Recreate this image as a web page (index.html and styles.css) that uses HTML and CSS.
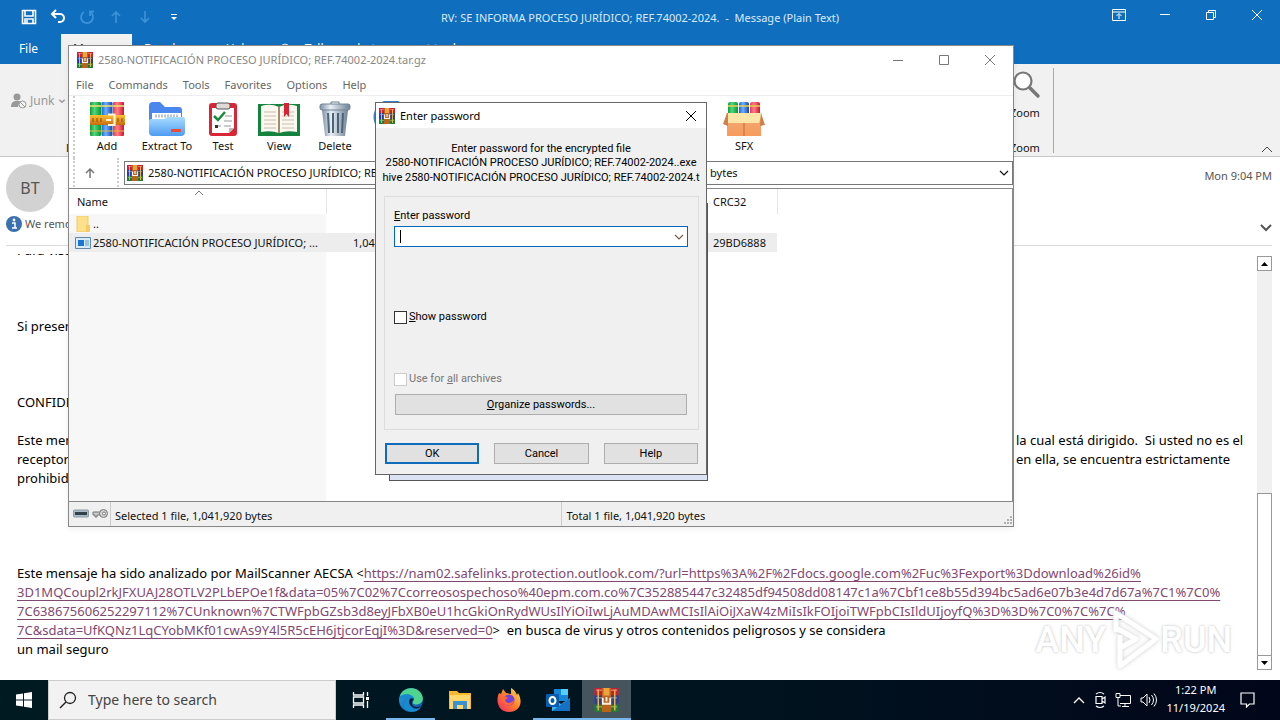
FILE: index.html
```html
<!DOCTYPE html>
<html lang="es">
<head>
<meta charset="utf-8">
<title>RV: SE INFORMA PROCESO JURÍDICO - Message</title>
<link rel="stylesheet" href="styles.css">
</head>
<body>
<svg class="defs" aria-hidden="true">
  <defs>
    <linearGradient id="gRed"><stop offset="0" stop-color="#e8394b"/><stop offset=".4" stop-color="#ff7f86"/><stop offset="1" stop-color="#d5122a"/></linearGradient>
    <linearGradient id="gBlue"><stop offset="0" stop-color="#1a62d6"/><stop offset=".4" stop-color="#6fb1fb"/><stop offset="1" stop-color="#1146a8"/></linearGradient>
    <linearGradient id="gGreen"><stop offset="0" stop-color="#0f9a3f"/><stop offset=".4" stop-color="#52d67c"/><stop offset="1" stop-color="#08962e"/></linearGradient>
    <linearGradient id="gGold" x2="0" y2="1"><stop offset="0" stop-color="#ffc233"/><stop offset="1" stop-color="#c96a0c"/></linearGradient>
    <linearGradient id="gFolder" x2="0" y2="1"><stop offset="0" stop-color="#a9dcff"/><stop offset="1" stop-color="#4c9bf2"/></linearGradient>
    <linearGradient id="gSteel"><stop offset="0" stop-color="#7d91a4"/><stop offset=".35" stop-color="#e8eff5"/><stop offset="1" stop-color="#6e8195"/></linearGradient>
    <linearGradient id="gBox" x2="0" y2="1"><stop offset="0" stop-color="#f0ad78"/><stop offset="1" stop-color="#f79a5c"/></linearGradient>
    <linearGradient id="gEdge" x2="1" y2="1"><stop offset="0" stop-color="#2aa5e0"/><stop offset="1" stop-color="#0c4fa0"/></linearGradient>
    <linearGradient id="gFox" x1="1" x2="0" y2="1"><stop offset="0" stop-color="#ffe14a"/><stop offset=".5" stop-color="#ff7b2b"/><stop offset="1" stop-color="#f0246a"/></linearGradient>
    <symbol id="books" viewBox="0 0 16 16">
      <rect x="0" y="0" width="16" height="5" fill="#c8203c"/><rect x="1" y="1" width="14" height="1" fill="#ea6a78"/>
      <rect x="0" y="5" width="16" height="6" fill="#2b3f9d"/><rect x="1" y="6" width="14" height="1" fill="#6c7fd0"/>
      <rect x="0" y="11" width="16" height="5" fill="#1f7a3c"/><rect x="1" y="12" width="14" height="1" fill="#58b06c"/>
      <rect x="2" y="1" width="1" height="14" fill="#e8b33a"/><rect x="13" y="1" width="1" height="14" fill="#e8b33a"/>
      <rect x="5" width="6" height="16" fill="#b8641c"/><rect x="6" width="4" height="5" fill="#eda23a"/>
      <path d="M5.500 6.500v4h5v-4M8 6v3" fill="none" stroke="#fff3e2" stroke-width="1.200"/>
    </symbol>
    <symbol id="close" viewBox="0 0 12 12"><path d="M1 1l10 10M11 1L1 11" fill="none" stroke="currentColor"/></symbol>
    <symbol id="chev" viewBox="0 0 12 8"><path d="M2 2l4 4 4-4" fill="none" stroke="currentColor" stroke-width="1.200"/></symbol>
    <symbol id="lens" viewBox="0 0 18 18"><circle cx="11" cy="7" r="5.500" fill="none" stroke="currentColor" stroke-width="1.300"/><path d="M7 11l-6 6" stroke="currentColor" stroke-width="1.500"/></symbol>
  </defs>
</svg>
<div class="desktop">
  <main class="mail">
    <header class="mail-title">
      <div class="quick">
        <button aria-label="Save"><svg width="16" height="16" viewBox="0 0 16 16"><path d="M1.500 1.500h13v13h-13zM4 2v5h8V2M4 14.500V10h8v4.500M6 11v3" fill="none" stroke="#fff" stroke-width="1.600"/></svg></button>
        <button aria-label="Undo"><svg width="16" height="16" viewBox="0 0 16 16"><path d="M6 1L2 5l4 4M2.500 5H10a4 4 0 010 8H8" fill="none" stroke="#fff" stroke-width="2"/></svg></button>
        <button aria-label="Redo"><svg width="16" height="16" viewBox="0 0 16 16"><path d="M5 3a6 6 0 106 0M11 7V2.500h4" fill="none" stroke="#3d93d8" stroke-width="1.800"/></svg></button>
        <button aria-label="Previous"><svg width="16" height="16" viewBox="0 0 16 16"><path d="M8 14V3M4 7l4-4 4 4" fill="none" stroke="#3d93d8" stroke-width="1.600"/></svg></button>
        <button aria-label="Next"><svg width="16" height="16" viewBox="0 0 16 16"><path d="M8 2v11M4 9l4 4 4-4" fill="none" stroke="#3d93d8" stroke-width="1.600"/></svg></button>
        <button aria-label="Customize"><svg width="16" height="16" viewBox="0 0 16 16"><path d="M5 5.500h6" stroke="#fff"/><path d="M5 8h6l-3 3z" fill="#fff"/></svg></button>
      </div>
      <div class="caption">RV: SE INFORMA PROCESO JURÍDICO; REF.74002-2024.&nbsp; -&nbsp; Message (Plain Text)</div>
      <div class="mail-controls">
        <button aria-label="Ribbon options"><svg width="14" height="12" viewBox="0 0 14 12"><path d="M.5.5h13v11H.5zM.5 3h13M7 10V5M4.500 7L7 4.500 9.500 7" fill="none" stroke="#fff"/></svg></button>
        <button aria-label="Minimize"><svg width="12" height="12"><path d="M1 5.500h10" stroke="#fff"/></svg></button>
        <button aria-label="Restore"><svg width="12" height="12" viewBox="0 0 12 12"><path d="M1.500 3.500h7v7h-7zM3.500 3V1.500h7v7H9" fill="none" stroke="#fff"/></svg></button>
        <button aria-label="Close"><svg width="12" height="12"><use href="#close"/></svg></button>
      </div>
    </header>
    <nav class="tabs">
      <button>File</button><button class="on">Message</button><button>Developer</button><button>Help</button>
      <button class="tell"><svg width="13" height="13"><use href="#lens"/></svg>Tell me what you want to do</button>
    </nav>
    <section class="ribbon">
      <div class="junk"><svg width="16" height="16" viewBox="0 0 16 16"><circle cx="6" cy="4" r="3.500" fill="#999"/><path d="M0 14c0-4 2-6 5-6h4l-2 6z" fill="#999"/><circle cx="11.500" cy="11.500" r="3.500" fill="#f1f1f1" stroke="#999"/><path d="M9 9l5 5" stroke="#999"/></svg>Junk <svg width="8" height="6" viewBox="0 0 12 8"><path d="M2 2l4 4 4-4" fill="none" stroke="#999" stroke-width="2"/></svg></div>
      <div class="group-label">Delete</div>
      <div class="zoom-group">
        <svg width="28" height="28" viewBox="0 0 28 28"><circle cx="10" cy="10" r="8.500" fill="#fff" stroke="#777" stroke-width="2.200"/><path d="M17 17l8 8" stroke="#777" stroke-width="3.500" stroke-linecap="round"/></svg>
        <span>Zoom</span><span>Zoom</span>
      </div>
      <button class="collapse" aria-label="Collapse ribbon"><svg width="12" height="8" viewBox="0 0 12 8"><path d="M1 7l5-5 5 5" fill="none" stroke="#444"/></svg></button>
    </section>
    <section class="sender">
      <div class="avatar">BT</div>
      <div class="sent">Mon 9:04 PM</div>
      <div class="info"><svg width="16" height="16" viewBox="0 0 16 16"><circle cx="8" cy="8" r="8" fill="#3a71ae"/><circle cx="8" cy="4" r="1.400" fill="#fff"/><path d="M6 7h3v5M6 12h5" fill="none" stroke="#fff" stroke-width="1.500"/></svg>We removed</div>
      <svg class="expand" width="12" height="8" viewBox="0 0 12 8"><path d="M1 1l5 5 5-5" fill="none" stroke="#555" stroke-width="2"/></svg>
    </section>
    <section class="reading">
      <article class="letter">
        <p class="gap3">Para visualizar</p>
        <p class="gap3">Si presenta</p>
        <p class="gap1">CONFIDENCIAL</p>
        <div class="split gap4">
          <p>Este mensaje</p><p>la cual está dirigido.&nbsp; Si usted no es el</p>
          <p>receptor</p><p>en ella, se encuentra estrictamente</p>
          <p>prohibido</p>
        </div>
        <p>Este mensaje ha sido analizado por MailScanner AECSA &lt;<a href="#">https://nam02.safelinks.protection.outlook.com/?url=https%3A%2F%2Fdocs.google.com%2Fuc%3Fexport%3Ddownload%26id%<br>3D1MQCoupl2rkJFXUAJ28OTLV2PLbEPOe1f&amp;data=05%7C02%7Ccorreosospechoso%40epm.com.co%7C352885447c32485df94508dd08147c1a%7Cbf1ce8b55d394bc5ad6e07b3e4d7d67a%7C1%7C0%<br>7C638675606252297112%7CUnknown%7CTWFpbGZsb3d8eyJFbXB0eU1hcGkiOnRydWUsIlYiOiIwLjAuMDAwMCIsIlAiOiJXaW4zMiIsIkFOIjoiTWFpbCIsIldUIjoyfQ%3D%3D%7C0%7C%7C%<br>7C&amp;sdata=UfKQNz1LqCYobMKf01cwAs9Y4l5R5cEH6jtjcorEqjI%3D&amp;reserved=0</a>&gt;&nbsp; en busca de virus y otros contenidos peligrosos y se considera<br>un mail seguro</p>
      </article>
      <div class="scroll" aria-hidden="true">
        <div class="arrow"><svg width="7" height="4"><path d="M0 4l3.500-4L7 4z"/></svg></div>
        <div class="track"></div><div class="thumb"></div>
        <div class="arrow"><svg width="7" height="4"><path d="M0 0l3.500 4L7 0z"/></svg></div>
      </div>
    </section>
    <div class="watermark">ANY<svg width="54" height="64" viewBox="0 0 54 64"><path d="M10 24V5L50 31 14 58V40l16-9-20-11M14 40V27" fill="none" stroke="#fff" stroke-width="5" stroke-linejoin="round"/></svg>RUN</div>
  </main>

  <section class="rar" aria-label="WinRAR">
    <header class="rar-title"><svg width="16" height="16"><use href="#books"/></svg><span>2580-NOTIFICACIÓN PROCESO JURÍDICO; REF.74002-2024.tar.gz</span>
      <div class="rar-controls">
        <button aria-label="Minimize"><svg width="12" height="12"><path d="M1 6.500h10" stroke="#777"/></svg></button>
        <button aria-label="Maximize"><svg width="12" height="12"><path d="M1.500 1.500h9v9h-9z" fill="none" stroke="#777"/></svg></button>
        <button aria-label="Close"><svg width="12" height="12"><use href="#close"/></svg></button>
      </div>
    </header>
    <nav class="menu"><button>File</button><button>Commands</button><button>Tools</button><button>Favorites</button><button>Options</button><button>Help</button></nav>
    <div class="tools">
      <button><svg width="36" height="36" viewBox="0 0 36 36"><rect x="1" y="1" width="11" height="34" rx="1" fill="url(#gGreen)"/><rect x="12.500" y="1" width="11" height="34" rx="1" fill="url(#gBlue)"/><rect x="24" y="1" width="11" height="34" rx="1" fill="url(#gRed)"/><path d="M1 5h11M12.500 5h11M24 5h11" stroke="#f4e36a" stroke-width="1.500"/><path d="M1 30h34" stroke="#e7b838"/><rect x="1" y="14" width="35" height="10" fill="url(#gGold)"/><path d="M4 17v4M8 17v4M12 17v4M29 17v4M33 17v4" stroke="#8e4c08" fill="none"/><path d="M19 13.500h6.500v10.500H19M17 19h5" fill="none" stroke="#fff4dc" stroke-width="2.200"/></svg>Add</button>
      <button><svg width="38" height="36" viewBox="0 0 38 36"><path d="M1 30V5q0-4 4-4h7l5 5h14q3 0 3 3v21z" fill="#4a86ee"/><path d="M4 12h29v12H4z" fill="#fff"/><path d="M7 15h23" stroke="#b7c4d2" stroke-width="3" stroke-dasharray="2 1"/><path d="M1 20q0-2 2-2h13l4-2h15q2 0 2 2v13q0 4-4 4H5q-4 0-4-4z" fill="url(#gFolder)"/><rect x="23" y="28" width="10" height="3" fill="#e74d39"/></svg>Extract To</button>
      <button><svg width="30" height="36" viewBox="0 0 30 36"><rect x="1" y="2" width="28" height="33" rx="3" fill="#d92535"/><path d="M4 7h22v20l-5 5H4z" fill="#fff"/><path d="M21 32v-5h5" fill="#bbb"/><rect x="8" y="2" width="14" height="6" rx="2" fill="#e1d8d8" stroke="#555"/><path d="M6 15l4 4 7-8" fill="none" stroke="#188c3b" stroke-width="2.500"/><path d="M17 15h7M16 20h8M9 25h4M16 25h7" stroke="#999"/><path d="M7 24h3v3H7z" fill="#333"/></svg>Test</button>
      <button><svg width="44" height="36" viewBox="0 0 44 36"><path d="M1 3h42v32H1z" fill="#158340"/><path d="M4 5q10-3 18 1 8-4 18-1v26q-10-2-18 1-8-3-18-1z" fill="#fbf8f0"/><path d="M22 6v26" stroke="#a48b70" stroke-width="2"/><path d="M7 11h12M7 15h12M7 19h12M7 23h12M7 27h12M25 11h12M25 15h12M25 19h12M25 23h12M25 27h12" stroke="#c8bcad"/><path d="M27 2h5v14l-2.500-3-2.500 3z" fill="#d72434"/></svg>View</button>
      <button><svg width="34" height="36" viewBox="0 0 34 36"><path d="M13 3V1h8v2" fill="none" stroke="#68798a"/><path d="M4 9h26l-3 26H7z" fill="url(#gSteel)"/><rect x="2" y="3" width="30" height="6" rx="2" fill="url(#gSteel)" stroke="#728395"/><path d="M10 12l1 20M15 12v20M20 12v20M25 12l-1 20" stroke="#4d6377" stroke-width="2"/></svg>Delete</button>
      <button><svg width="36" height="36" viewBox="0 0 36 36"><circle cx="18" cy="16" r="16" fill="#dbeeff" stroke="#357cc8" stroke-width="3"/></svg>Find</button>
      <button class="sfx"><svg width="42" height="36" viewBox="0 0 42 36"><rect x="5" y="1" width="10" height="14" rx="2" fill="url(#gGreen)"/><rect x="16" y="1" width="10" height="14" rx="2" fill="url(#gBlue)"/><rect x="27" y="1" width="10" height="14" rx="2" fill="url(#gRed)"/><path d="M5 5h10M16 5h10M27 5h10" stroke="#e6d24d" stroke-width="1.500"/><path d="M4 12h34v23H4z" fill="url(#gBox)"/><path d="M3 12h36l-3 10H4z" fill="#fbe5a9"/><path d="M4 12L0 23l5 2V12zM38 12l4 12-5 1z" fill="#cf7f4b"/><path d="M21 22v13" stroke="#bf6a38"/></svg>SFX</button>
    </div>
    <div class="address">
      <button class="up" aria-label="Up"><svg width="12" height="12" viewBox="0 0 12 12"><path d="M6 11V2M2 6l4-4 4 4" fill="none" stroke="#777" stroke-width="1.500"/></svg></button>
      <div class="path"><svg width="16" height="16"><use href="#books"/></svg><span class="arch">2580-NOTIFICACIÓN PROCESO JURÍDICO; REF.74002-2024.tar.gz</span><span class="bytes">bytes</span><svg width="12" height="8"><use href="#chev"/></svg></div>
    </div>
    <div class="list">
      <table>
        <colgroup><col class="c-name"><col class="c-size"><col class="c-crc"></colgroup>
        <thead><tr><th>Name<svg class="sort" width="10" height="6" viewBox="0 0 10 6"><path d="M1 5l4-4 4 4" fill="none" stroke="#777"/></svg></th><th></th><th>CRC32</th></tr></thead>
        <tbody>
          <tr><td><svg width="16" height="16" viewBox="0 0 16 16"><path d="M2 0h11v16H2z" fill="#ffe08a" stroke="#eec964"/><path d="M11 9h4v7h-4z" fill="#f3cd62"/></svg><span>..</span></td><td></td><td></td></tr>
          <tr class="sel"><td><svg width="16" height="12" viewBox="0 0 16 12"><path d="M.5.5h15v11H.5z" fill="#d7ebfa" stroke="#5f87a8"/><path d="M3 3h6v6H3z" fill="#1976d2"/><path d="M10 4h4M10 6h4M10 8h4" stroke="#5a9bd0"/></svg><span>2580-NOTIFICACIÓN PROCESO JURÍDICO; ...</span></td><td><span class="num">1,041,920</span></td><td>29BD6888</td></tr>
        </tbody>
      </table>
    </div>
    <footer class="status">
      <div class="st-icons"><svg width="16" height="12" viewBox="0 0 16 12"><rect x=".5" y="2" width="15" height="7" rx="1" fill="#a9bcc4" stroke="#8c9aa2"/><rect x="2" y="4" width="12" height="3" fill="#304149"/></svg><svg width="16" height="12" viewBox="0 0 16 12"><path d="M1 4h8v3H5v2H3V7H1z" fill="#c7c9cb" stroke="#777"/><circle cx="11.500" cy="5.500" r="4" fill="#d4d4d4" stroke="#777"/><circle cx="12" cy="5.500" r="1.500" fill="#fff" stroke="#777"/></svg></div>
      <div class="st-left">Selected 1 file, 1,041,920 bytes</div><div class="st-right">Total 1 file, 1,041,920 bytes</div>
      <svg width="10" height="10"><path d="M7 1h2M4 4h2M7 4h2M1 7h2M4 7h2M7 7h2" stroke="#b0b0b0" stroke-width="2"/></svg>
    </footer>
  </section>

  <div class="behind" aria-hidden="true"></div>
  <form class="dialog" role="dialog" aria-label="Enter password">
    <header class="dlg-title"><svg width="16" height="16"><use href="#books"/></svg><span>Enter password</span><button type="button" aria-label="Close"><svg width="12" height="12"><use href="#close"/></svg></button></header>
    <div class="prompt"><p>Enter password for the encrypted file</p><p>2580-NOTIFICACIÓN PROCESO JURÍDICO; REF.74002-2024..exe</p><p>hive 2580-NOTIFICACIÓN PROCESO JURÍDICO; REF.74002-2024.t</p></div>
    <div class="box">
      <label for="pw"><u>E</u>nter password</label>
      <div class="combo"><i class="caret"></i><input id="pw" type="text"><svg width="12" height="8"><use href="#chev"/></svg></div>
      <label class="check show"><input type="checkbox"><span><u>S</u>how password</span></label>
      <label class="check all"><input type="checkbox" disabled><span>Use for <u>a</u>ll archives</span></label>
      <button type="button" class="btn"><span><u>O</u>rganize passwords...</span></button>
    </div>
    <div class="actions"><button type="button" class="btn ok">OK</button><button type="button" class="btn">Cancel</button><button type="button" class="btn">Help</button></div>
  </form>

  <footer class="taskbar">
    <button class="start" aria-label="Start"><svg width="16" height="16" viewBox="0 0 16 16"><path d="M0 2.500l7-1v6H0zM8 1.300L16 0v7.500H8zM0 8.500h7v6l-7-1zM8 8.500h8V16l-8-1.300z" fill="#fff"/></svg></button>
    <label class="search"><svg width="18" height="18"><use href="#lens"/></svg><input type="text" placeholder="Type here to search" aria-label="Search"></label>
    <button class="app" aria-label="Task view"><svg width="18" height="18" viewBox="0 0 18 18"><path d="M1.500 1v3h10V1M1.500 17v-3h10v3M1.500 6h10v6h-10zM15.500 1v4M15.500 10v7" fill="none" stroke="#fff" stroke-width="1.300"/><path d="M14 6h3v3h-3z" fill="#fff"/></svg></button>
    <button class="app open" aria-label="Edge"><svg width="24" height="24" viewBox="0 0 24 24"><circle cx="12" cy="12" r="12" fill="url(#gEdge)"/><path d="M1 8C4-1 18-3 23 7c3 7-3 11-8 9-2-1-1-2 0-4 1-5-8-8-14-4z" fill="#50d590"/><path d="M1 9c7-6 15-1 14 3-5-3-7 4-2 8 3 2 7 1 9-1-4 7-15 6-18-1 2-1 1-5 5-8-3-1-6 0-8 2z" fill="#168cd0"/><path d="M12 10c-4 3-1 8 3 10 4 1 6-1 7-2-4 2-9 1-9-3 0-2 1-3 2-4z" fill="#071c35"/></svg></button>
    <button class="app" aria-label="File Explorer"><svg width="22" height="20" viewBox="0 0 22 20"><path d="M0 1h8l2 2h12v16H0z" fill="#f8b72c"/><path d="M1 5h20v14H1z" fill="#ffd76a"/><path d="M4 19v-8h14v8h-4v-4H8v4z" fill="#3c91d0"/></svg></button>
    <button class="app" aria-label="Firefox"><svg width="24" height="24" viewBox="0 0 24 24"><path d="M2 5l2 1 2-5 3 4 5 1V0c4 2 5 5 6 7l1-2c6 10 1 19-9 19S-2 14 2 5z" fill="url(#gFox)"/><circle cx="12" cy="12" r="5.500" fill="#7641d8"/><path d="M4 9c4-1 6 0 7 1l-3 2c1 4 6 4 9 0 0 7-11 8-13-3z" fill="#ff6836"/></svg></button>
    <button class="app open" aria-label="Outlook"><svg width="24" height="22" viewBox="0 0 24 22"><path d="M8 0h14v12H8z" fill="#1686d9"/><path d="M15 0h7v6h-7z" fill="#50d0ff"/><path d="M6 9l9 6 9-6v13H6z" fill="#35b8f1"/><path d="M24 9v13H6z" fill="#1571c4"/><rect y="5" width="13" height="13" rx="1" fill="#075cae"/><ellipse cx="6.500" cy="11.500" rx="3" ry="3.500" fill="none" stroke="#fff" stroke-width="2"/></svg></button>
    <button class="app open active" aria-label="WinRAR"><svg width="25" height="24"><use href="#books"/></svg></button>
    <div class="tray">
      <svg width="12" height="8" viewBox="0 0 12 8"><path d="M1 7l5-5 5 5" fill="none" stroke="#fff" stroke-width="1.300"/></svg>
      <svg width="12" height="18" viewBox="0 0 12 18"><path d="M2 5.500h6v7H2zM8 8l3-2v6L8 10M2 3q4-3 8 0M2 15q4 3 8 0" fill="none" stroke="#fff" stroke-width="1.200"/></svg>
      <svg width="16" height="16" viewBox="0 0 16 16"><path d="M5 3.500h10.500v8H5M1 1.500h4v4H1zM3 6v8h3M10 12v2M7 14.500h7" fill="none" stroke="#fff"/></svg>
      <svg width="17" height="16" viewBox="0 0 17 16"><path d="M1 6h2l4-4v12l-4-4H1zM9 5q2 3 0 6M11.500 3q4 5 0 10M14 1.500q5 6.500 0 13" fill="none" stroke="#fff"/></svg>
      <div class="clock"><div>1:22 PM</div><div>11/19/2024</div></div>
      <svg class="note" width="15" height="16" viewBox="0 0 15 16"><path d="M1 1h13v11H9.500l-3 3v-3H1z" fill="none" stroke="#fff" stroke-width="1.200"/></svg>
    </div>
  </footer>
</div>
</body>
</html>
```
FILE: styles.css
```css
* { box-sizing: border-box; }
body { margin: 0; font: 11px/16px "Noto Sans", "Open Sans", sans-serif; color: #111; background: #fff; }
p { margin: 0; }
button { border: 0; padding: 0; margin: 0; background: none; font: inherit; color: inherit; }
svg { display: block; flex: none; }
.defs { position: absolute; width: 0; height: 0; }
.desktop { position: relative; height: 100vh; display: flex; flex-direction: column; overflow: hidden; }
.mail { position: relative; flex: 1; min-height: 0; display: flex; flex-direction: column; white-space: nowrap; }

.mail-title { height: 34px; background: #106ebe; color: #fff; display: grid; grid-template-columns: 1fr auto 1fr; align-items: center; }
.quick { display: flex; gap: 13px; padding-left: 21px; }
.caption { color: #d9ebfa; padding-top: 2px; }
.mail-controls { display: flex; justify-content: flex-end; padding-bottom: 4px; }
.mail-controls button { width: 46px; display: flex; justify-content: center; }
.tabs { height: 30px; background: #106ebe; color: #fff; display: flex; font-size: 12px; }
.tabs button { height: 30px; padding: 0 12px; }
.tabs button:first-child { width: 61px; padding: 0 4px 0 0; }
.tabs .on { width: 71px; background: #f1f1f1; color: #333; }
.tabs .tell { display: flex; align-items: center; gap: 12px; padding-left: 16px; }
.tabs .tell svg { transform: scaleX(-1); }
.ribbon { flex: none; height: 93px; background: #f1f1f1; border-bottom: 1px solid #c8c8c8; display: flex; align-items: flex-start; }
.junk { display: flex; align-items: center; gap: 3px; padding: 29px 0 0 11px; color: #999; font-size: 12px; width: 66px; }
.group-label { padding-top: 76px; }
.zoom-group { height: 85px; margin: 4px 0 0 auto; width: 44px; border-right: 1px solid #aaa; display: flex; flex-direction: column; align-items: flex-start; }
.zoom-group span { padding-top: 6px; }
.zoom-group span + span { padding-top: 19px; }
.zoom-group svg { margin: 3px 0 0 3px; }
.collapse { align-self: flex-end; width: 226px; padding: 0 7px 3px 0; display: flex; justify-content: flex-end; }
.sender { flex: none; height: 89px; margin: 0 8px 0 6px; border-bottom: 1px solid #ddd; display: grid; grid-template: 52px 16px / 1fr auto; padding-top: 7px; color: #555; }
.avatar { width: 48px; height: 48px; border-radius: 50%; background: #d2d2d2; font-size: 16px; display: flex; align-items: center; justify-content: center; }
.sent { padding-top: 4px; }
.info { display: flex; align-items: center; gap: 3px; }
.expand { justify-self: end; align-self: end; }
.reading { flex: 1; min-height: 0; display: flex; margin: 8px 8px 10px 17px; }
.letter { flex: 1; min-width: 0; overflow: hidden; font: 13px/19px "Noto Sans", "Open Sans", sans-serif; color: #000; }
.letter > :first-child { margin-top: -13px; }
.letter a { color: #814872; text-underline-offset: 3px; }
.gap1 { margin-bottom: 19px; }
.gap3 { margin-bottom: 57px; }
.gap4 { margin-bottom: 76px; }
.split { display: grid; grid-template-columns: 999px 1fr; }
.scroll { width: 15px; margin-top: 2px; display: flex; flex-direction: column; background: #f0f0f0; }
.arrow { height: 15px; border: 1px solid #999; background: #fff; display: flex; align-items: center; justify-content: center; }
.track { flex: 223; }
.thumb { flex: 161; border: 1px solid #999; border-bottom: 0; background: #fff; }
.watermark { position: absolute; right: 48px; bottom: 8px; display: flex; align-items: center; font: 500 36px/60px Roboto, sans-serif; color: #fff; text-shadow: 0 0 3px #bbb; }
.watermark svg { filter: drop-shadow(0 0 2px #ccc); }

.rar { position: absolute; left: 68px; top: 45px; right: 266px; height: 482px; background: #fff; border: 1px solid #888; display: flex; flex-direction: column; white-space: nowrap; box-shadow: 0 2px 6px #0001; }
.rar-title { height: 28px; display: flex; align-items: center; gap: 5px; padding-left: 8px; color: #888; }
.rar-controls { margin-left: auto; display: flex; color: #777; }
.rar-controls button { width: 46px; display: flex; justify-content: center; }
.menu { height: 22px; border-bottom: 1px solid #eee; display: flex; align-items: center; gap: 15px; padding-left: 7px; color: #666; }
.tools { height: 62px; display: flex; margin-left: 4px; border-left: 2px dotted #ccc; padding-top: 5px; }
.tools button { display: flex; flex-direction: column; align-items: center; gap: 1px; width: 56px; }
.tools button:first-child { width: 64px; }
.tools .sfx { margin-left: 269px; width: 112px; }
.address { height: 29px; display: flex; align-items: center; margin-left: 4px; border-left: 2px dotted #ccc; }
.up { width: 44px; height: 29px; border-right: 2px dotted #ccc; display: flex; align-items: center; padding-left: 9px; }
.path { flex: 1; height: 24px; margin-left: 5px; border: 1px solid #777; display: flex; align-items: center; gap: 5px; padding: 0 2px; }
.arch { width: 557px; }
.bytes { flex: 1; }
.list { flex: 1; margin-top: 1px; border: 1px solid #888; border-left: 0; background: linear-gradient(#fff 25px, #f7f7f7 25px) no-repeat left / 257px 100%; }
table { border-collapse: collapse; table-layout: fixed; width: 708px; }
.c-name { width: 257px; } .c-size { width: 383px; } .c-crc { width: 68px; }
th { height: 25px; padding: 0 0 0 8px; text-align: left; font-weight: 400; position: relative; border-right: 1px solid #e5e5e5; }
th:nth-child(2) { border: 0; }
th:last-child, td:last-child { padding-left: 4px; }
.sort { position: absolute; left: 125px; top: 1px; }
td { height: 19px; padding: 0; }
td:first-child { display: flex; align-items: center; gap: 2px; padding-left: 6px; }
.sel { background: #ededed; }
.num { padding-left: 27px; }
.status { height: 24px; background: #f0f0f0; display: flex; align-items: center; }
.st-icons { display: flex; gap: 3px; padding: 0 2px 0 4px; }
.st-left, .st-right { border-left: 1px solid #ccc; padding: 4px 0 0 4px; line-height: 20px; }
.st-left { flex: 451; }
.st-right { flex: 441; }
.status > svg { align-self: flex-end; }

.behind { position: absolute; left: 389px; top: 203px; width: 319px; height: 278px; background: #dbe2f3; border: 1px solid #555; }
.dialog { position: absolute; left: 375px; top: 102px; width: 332px; background: #f0f0f0; border: 1px solid #666; font: 11px/14px Roboto, sans-serif; color: #000; white-space: nowrap; }
.dlg-title { height: 25px; background: #fff; display: flex; align-items: center; gap: 5px; padding: 0 9px 0 3px; font-family: "Noto Sans", sans-serif; }
.dlg-title button { margin-left: auto; }
.prompt { padding-top: 14px; text-align: center; line-height: 14px; }
.prompt p { height: 14px; display: flex; justify-content: center; }
.prompt p:nth-child(2) { height: 15px; }
.box { margin: 11px 7px 0 8px; height: 234px; border: 1px solid #ddd; padding: 12px 10px 0 9px; display: flex; flex-direction: column; }
.combo { height: 21px; margin-top: 3px; border: 1px solid #0067c0; background: #fff; display: flex; align-items: center; padding: 0 2px 0 5px; flex: none; color: #7b5a4b; }
.caret { width: 1px; height: 13px; background: #000; }
.combo input { flex: 1; min-width: 0; border: 0; outline: 0; background: none; height: 18px; font: inherit; }
.check { display: flex; align-items: center; gap: 2px; }
.check input { appearance: none; width: 13px; height: 13px; margin: 0; border: 1px solid #333; background: #fff; }
.check.show { margin-top: 63px; }
.check.all { margin-top: 48px; color: #777; }
.check.all input { border-color: #ccc; }
.btn { background: #e1e1e1; border: 1px solid #adadad; height: 21px; }
.box .btn { margin: 8px 1px 0; flex: none; }
.actions { display: grid; grid-template-columns: 1fr 1fr 1fr; gap: 15px; padding: 13px 8px 10px 9px; }
.ok { border: 2px solid #0f6cbd; }

.taskbar { flex: none; height: 40px; background: linear-gradient(90deg, #001a22, #00131f 60%, #02061a); color: #fff; display: flex; align-items: stretch; white-space: nowrap; }
.start { width: 48px; display: flex; align-items: center; justify-content: center; }
.search { width: 288px; background: #f2f2f2; border: 1px solid #ccc; display: flex; align-items: center; gap: 11px; padding-left: 10px; color: #222; }
.search input { border: 0; background: none; width: 200px; font: 14px/20px "Noto Sans", sans-serif; padding: 0; }
.search input::placeholder { color: #444; opacity: 1; }
.app { width: 49px; display: flex; align-items: center; justify-content: center; border-bottom: 2px solid transparent; border-top: 2px solid transparent; }
.search + .app { width: 50px; }
.open { border-bottom-color: #78b7ec; }
.active { background: #46545d; border-top-color: #46545d; }
.tray { margin-left: auto; display: flex; align-items: center; gap: 9px; padding-right: 25px; }
.clock { text-align: center; line-height: 18px; padding-bottom: 2px; }
.note { margin-left: 6px; }
```
